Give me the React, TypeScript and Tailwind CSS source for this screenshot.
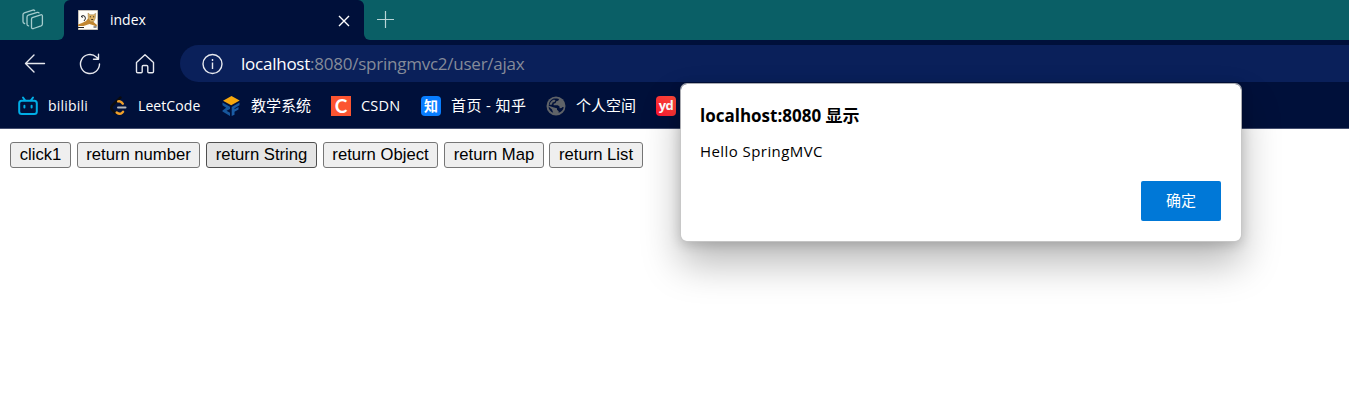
import type { ReactNode } from "react";

const ui = "font-['Open_Sans','Noto_Sans_CJK_SC',sans-serif]";

function Bookmark({ icon, label, className }: { icon: ReactNode; label: string; className: string }) {
  return (
    <div className="flex shrink-0 items-center gap-2.5">
      <span className="block size-5 shrink-0">{icon}</span>
      <span className={`block whitespace-nowrap text-white ${className}`}>{label}</span>
    </div>
  );
}

function CollectionsIcon() {
  return (
    <svg width="22" height="22" viewBox="0 0 22 22" fill="none" stroke="#a6cccd" strokeWidth="1.300" strokeLinejoin="round" strokeLinecap="round">
      <path d="M10.2 8.6l8.6-2.8q1.6-.4 1.6 1.2v8q0 1.300-1.300 1.800l-7.600 2.700q-2 .5-2-1.200v-8q0-1.200 .7-1.700z" />
      <path d="M6.600 16.800q-1.600-.2-1.600-1.600v-7.200q0-1.300 1.300-1.800l9-2.800q1.300-.2 1.700 .5" />
      <path d="M2.600 14.500q-1.600-.4-1.600-1.700v-7.300q0-1.200 1.300-1.700l8.500-2.700q1.200-.3 1.900 .5" />
    </svg>
  );
}

function TomcatIcon() {
  return (
    <svg width="20" height="20" viewBox="0 0 20 20">
      <path fill="#fffef8" stroke="#d8cbb0" strokeWidth=".6" d="M.3 .3h19.400v19.400H.3z" />
      <path d="M3 6.500q2-2 4 0q1.300 2.500-1 4.500M3 6.500l2 .8" fill="none" stroke="#222" strokeWidth="1" />
      <path d="M0 14.500l4-1.500 4-2 2.500-3 5 4 3.500 3-.5 1.500-4-1.500-3-1-3 1-3 1H0z" fill="#c2872f" />
      <path d="M10 3l2 1.700h3.500L17.700 3.300l-.4 5-1.500 3.200-3.300 .5-2.300-3.500z" fill="#dcb163" stroke="#8a6a35" strokeWidth=".4" />
      <path d="M11.800 6.800h1.200M15 6.800h1.200M13.200 9.500h2" stroke="#332817" strokeWidth=".9" />
      <path d="M0 17.500h6M15.500 17h3" stroke="#222" strokeWidth="1" />
    </svg>
  );
}

function BilibiliIcon() {
  return (
    <svg width="20" height="20" viewBox="0 0 20 20" fill="none" stroke="#00aee6" strokeWidth="2" strokeLinecap="round">
      <rect x="1.200" y="4.800" width="17.600" height="13.200" rx="2.500" />
      <path d="M5 1.500l2 2.800M15 1.500l-2 2.800M6.400 9.800v1.800M13.600 9.800v1.800" />
    </svg>
  );
}

function LeetCodeIcon() {
  return (
    <svg width="20" height="20" viewBox="0 0 20 20" fill="none" strokeLinecap="round">
      <path d="M12.500 1.500L4.500 9q-2.500 2.600 0 5.200l2.500 2.600" stroke="#0c0c0e" strokeWidth="2.400" />
      <path d="M10.200 5.400q1.800-.6 3.400 1l1.200 1.300M8.700 16.500q3 2.400 5.300 .4l1-1.200" stroke="#f0a02a" strokeWidth="2.400" />
      <path d="M10 11.500h7.500" stroke="#b5b7ba" strokeWidth="2" />
    </svg>
  );
}

function SchoolIcon() {
  return (
    <svg width="20" height="20" viewBox="0 0 20 20">
      <path d="M2 4.800L10.500 0l8.200 4.600-8.500 4.700z" fill="#f7a80d" />
      <path d="M1.500 6.500l7.500 4.200v2.300l-3.500 1.700 3.500 2V20l-7.500-4.500v-1l3.700-2.700-3.700-2.500z" fill="#17579c" />
      <path d="M10.700 11l7.800-4.400v2.600l-5 3v1l4-2.200v2.500l-4 2.200v3l-2.800 1.300z" fill="#1b5ca4" />
    </svg>
  );
}

function GlobeIcon() {
  return (
    <svg width="20" height="20" viewBox="0 0 20 20">
      <circle cx="10" cy="10" r="9.500" fill="#5f6368" />
      <path d="M11 2.500l2 .4-.6 1.700-2.400 .8-.3 1.600-2 .7-.1 1.600h4l1.800 1 .3 1.900 1.800-.2 1-1 1.300 .3q-1 4.200-5.200 5.500l.1-1.500-1.700-1.600v-1.500L8 11.500l-5.300-1.700q0-5.300 5-7.300z" fill="#00103a" />
      <path d="M2.500 10.500l3.500 3 1.200 3.200Q2.900 15 2.500 10.500z" fill="#00103a" />
      <path d="M8 3.500l1.500 1-1 1.500-2 .5-.5 2-2.500 .5q.5-4 4.500-5.500z" fill="#5f6368" />
    </svg>
  );
}

const bookmarks: { icon: ReactNode; label: string; className: string }[] = [
  { icon: <BilibiliIcon />, label: "bilibili", className: "w-10 text-[14px] leading-5 tracking-[0.2px]" },
  { icon: <LeetCodeIcon />, label: "LeetCode", className: "w-[63px] text-[14px] leading-5 tracking-[0.08px]" },
  { icon: <SchoolIcon />, label: "教学系统", className: "w-[60px] pb-0.5 text-[15px] leading-5" },
  {
    icon: <span className="flex size-5 items-center justify-center bg-[#fc5531] font-['Lato',sans-serif] text-[19px] leading-5 font-bold text-white">C</span>,
    label: "CSDN",
    className: "w-10 text-[14.500px] leading-5 tracking-[0.2px]",
  },
  {
    icon: <span className="flex size-5 items-center justify-center rounded bg-[#087dff] pb-px text-[14px] leading-5 font-bold text-white">知</span>,
    label: "首页 - 知乎",
    className: "w-[75px] pb-0.5 text-[15px] leading-5 tracking-[0.4px]",
  },
  { icon: <GlobeIcon />, label: "个人空间", className: "w-[60px] pb-0.5 text-[15px] leading-5" },
  {
    icon: <span className="flex size-5 items-center justify-center rounded bg-linear-to-bl from-[#ff4a3a] to-[#fc0830] pb-0.5 text-[13px] leading-5 font-bold tracking-[-0.5px] text-white">yd</span>,
    label: "",
    className: "",
  },
];

const pageButtons = [
  { label: "click1", className: "w-[61px]" },
  { label: "return number", className: "w-[123px]" },
  { label: "return String", className: "w-[111px]", active: true },
  { label: "return Object", className: "w-[115px]" },
  { label: "return Map", className: "w-[100px]" },
  { label: "return List", className: "-ml-px w-[94px]" },
];

function TabStrip() {
  return (
    <div className="flex h-10 bg-[#00103a]">
      <div className="flex w-16 justify-center rounded-br-md bg-[#0a5f66] pt-[9px] pl-0.5">
        <CollectionsIcon />
      </div>
      <div className="w-[300px] bg-[#0a5f66]">
        <div className="flex h-10 items-center rounded-t-md bg-[#00103a] pl-3.5">
          <TomcatIcon />
          <span className="ml-3 flex-1 text-[14px] leading-5 text-white">index</span>
          <svg className="mt-px mr-3.5" width="12" height="12" viewBox="0 0 12 12" stroke="#fff" strokeWidth="1.400">
            <path d="M1 1l10 10M11 1L1 11" />
          </svg>
        </div>
      </div>
      <div className="flex-1 rounded-bl-md bg-[#0a5f66] pt-[11px] pl-3">
        <svg width="19" height="18" viewBox="0 0 19 18" stroke="#b8d4d6" strokeWidth="1.200">
          <path d="M9.500 0v17M1 8.500h17" />
        </svg>
      </div>
    </div>
  );
}

function Toolbar() {
  return (
    <div className="flex h-[47px] items-start pt-[5px]">
      <div className="flex h-[37px] w-[180px] shrink-0 items-center pl-6">
        <svg width="22" height="20" viewBox="0 0 22 20" fill="none" stroke="#e6e8ee" strokeWidth="1.400" strokeLinecap="round" strokeLinejoin="round">
          <path d="M20.500 9.500H1.500M10 1L1.500 9.500l8.500 8.500" />
        </svg>
        <svg className="ml-[33px]" width="22" height="22" viewBox="0 0 22 22" fill="none" stroke="#e6e8ee" strokeWidth="1.400" strokeLinecap="round" strokeLinejoin="round">
          <path d="M20.500 11a9.500 9.500 0 1 1-3.200-7.100l2 2M19.500 1.200v5h-5" />
        </svg>
        <svg className="ml-[33px]" width="22" height="22" viewBox="0 0 22 22" fill="none" stroke="#e6e8ee" strokeWidth="1.400" strokeLinejoin="round">
          <path d="M2.500 9.500L11 1.800l8.500 7.700v9q0 1.200-1.200 1.200h-3.500q-1 0-1-1v-5q0-1.200-1.200-1.200H9.400q-1.200 0-1.200 1.200v5q0 1-1 1H3.700q-1.200 0-1.200-1.200z" />
        </svg>
      </div>
      <div className="flex h-[37px] flex-1 items-center rounded-l-full bg-[#0a205a] pl-[22px]">
        <svg width="22" height="22" viewBox="0 0 22 22" fill="none" stroke="#e6e8ee" strokeWidth="1.400">
          <circle cx="10.500" cy="11" r="9.500" />
          <path d="M10.500 9.500v6.500M10.500 6v2" />
        </svg>
        <span className="ml-[17px] text-[17px] leading-6 tracking-[-0.24px] whitespace-nowrap text-[#858b99]">
          <span className="text-white">localhost</span>:8080/springmvc2/user/ajax
        </span>
      </div>
    </div>
  );
}

function AlertDialog() {
  return (
    <div
      role="alertdialog"
      className="absolute top-[83px] left-[680px] flex h-[159px] w-[562px] flex-col rounded-[7px] border border-[#c8c8c8]/85 bg-white bg-clip-padding pt-5 pr-5 pb-5 pl-[19px] text-black shadow-[0_22px_38px_rgba(0,0,0,0.27),0_3px_12px_rgba(0,0,0,0.16)]"
    >
      <h1 className="text-[17px] leading-[23px] font-bold">localhost:8080 显示</h1>
      <p className="mt-3 text-[15px] leading-6 tracking-[0.43px]">Hello SpringMVC</p>
      <button className="mt-auto h-10 w-20 shrink-0 self-end rounded-xs bg-[#0078d7] pb-0.5 text-[15px] text-white">确定</button>
    </div>
  );
}

export default function App() {
  return (
    <div className={`relative h-[412px] w-full overflow-hidden bg-white ${ui}`}>
      <header className="flex h-[129px] flex-col border-b border-[#444f70] bg-[#00103a]">
        <TabStrip />
        <Toolbar />
        <nav className="flex h-[38px] items-center gap-5 pl-[18px]">
          {bookmarks.map((b, i) => (
            <Bookmark key={i} {...b} />
          ))}
        </nav>
      </header>
      <main className="flex gap-1.5 pt-[13px] pl-2.5">
        {pageButtons.map((b) => (
          <button
            key={b.label}
            className={`h-[26px] rounded-[3px] border font-['Liberation_Sans',sans-serif] text-[16.667px] leading-6 whitespace-nowrap text-black ${
              b.active ? "border-[#4f4f4f] bg-[#e5e5e5]" : "border-[#767676] bg-[#efefef]"
            } ${b.className}`}
          >
            {b.label}
          </button>
        ))}
      </main>
      <AlertDialog />
    </div>
  );
}
